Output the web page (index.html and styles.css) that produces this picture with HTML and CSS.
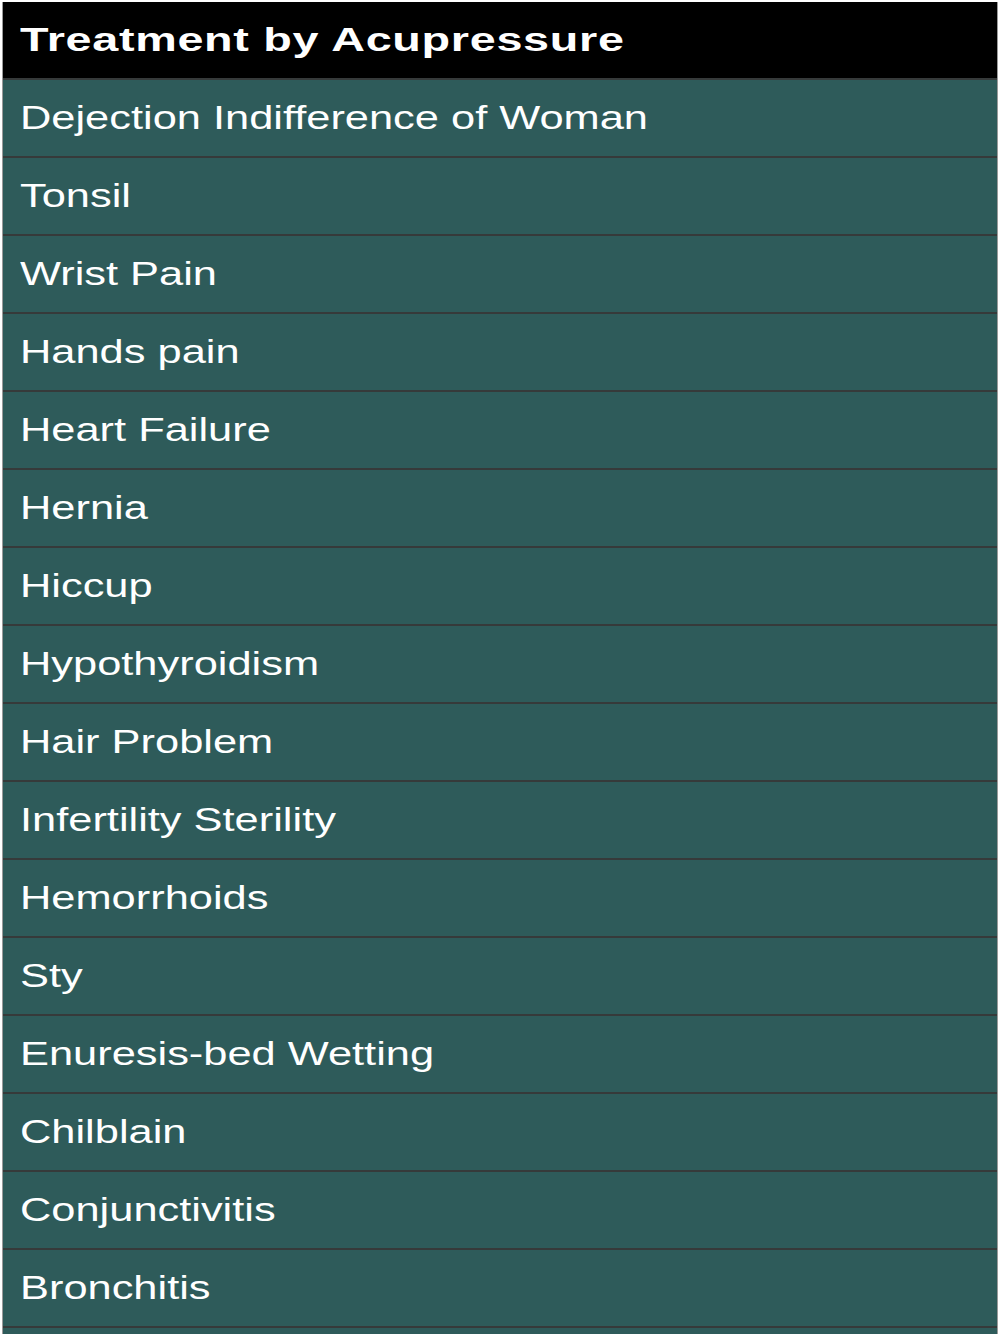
FILE: index.html
```html
<!DOCTYPE html>
<html lang="en">
<head>
<meta charset="utf-8">
<title>Treatment by Acupressure</title>
<link rel="stylesheet" href="styles.css">
</head>
<body>
<div class="screen">
  <header class="title-bar"><span class="title">Treatment by Acupressure</span></header>
  <ul class="list">
    <li class="row"><span class="label">Dejection Indifference of Woman</span></li>
    <li class="row"><span class="label">Tonsil</span></li>
    <li class="row"><span class="label">Wrist Pain</span></li>
    <li class="row"><span class="label">Hands pain</span></li>
    <li class="row"><span class="label">Heart Failure</span></li>
    <li class="row"><span class="label">Hernia</span></li>
    <li class="row"><span class="label">Hiccup</span></li>
    <li class="row"><span class="label">Hypothyroidism</span></li>
    <li class="row"><span class="label">Hair Problem</span></li>
    <li class="row"><span class="label">Infertility Sterility</span></li>
    <li class="row"><span class="label">Hemorrhoids</span></li>
    <li class="row"><span class="label">Sty</span></li>
    <li class="row"><span class="label">Enuresis-bed Wetting</span></li>
    <li class="row"><span class="label">Chilblain</span></li>
    <li class="row"><span class="label">Conjunctivitis</span></li>
    <li class="row"><span class="label">Bronchitis</span></li>
  </ul>
</div>
</body>
</html>
```

FILE: styles.css
```css
html, body {
  margin: 0;
  padding: 0;
  background: #ffffff;
  height: 100%;
  overflow: hidden;
}
body {
  padding: 2px 2px 0 2px;
  box-sizing: border-box;
  font-family: "Liberation Sans", Arial, sans-serif;
}
.screen {
  border-left: 1px solid #9a9a9a;
  border-right: 1px solid #9a9a9a;
  background: #2e5b5a;
  height: 100%;
}
.title-bar {
  height: 76px;
  background: #000000;
  display: flex;
  align-items: center;
  padding-left: 17px;
}
.title {
  display: inline-block;
  color: #ffffff;
  font-weight: bold;
  font-size: 33.5px;
  letter-spacing: 0.5px;
  transform: scaleX(1.395);
  transform-origin: left center;
  white-space: nowrap;
}
.list {
  list-style: none;
  margin: 0;
  padding: 0;
  border-bottom: 2px solid #363a3a;
}
.row {
  height: 76px;
  border-top: 2px solid #363a3a;
  background: #2e5b5a;
  display: flex;
  align-items: center;
  padding-left: 17px;
}
.label {
  display: inline-block;
  color: #ffffff;
  font-size: 33px;
  transform: scaleX(1.315);
  transform-origin: left center;
  white-space: nowrap;
}
```
